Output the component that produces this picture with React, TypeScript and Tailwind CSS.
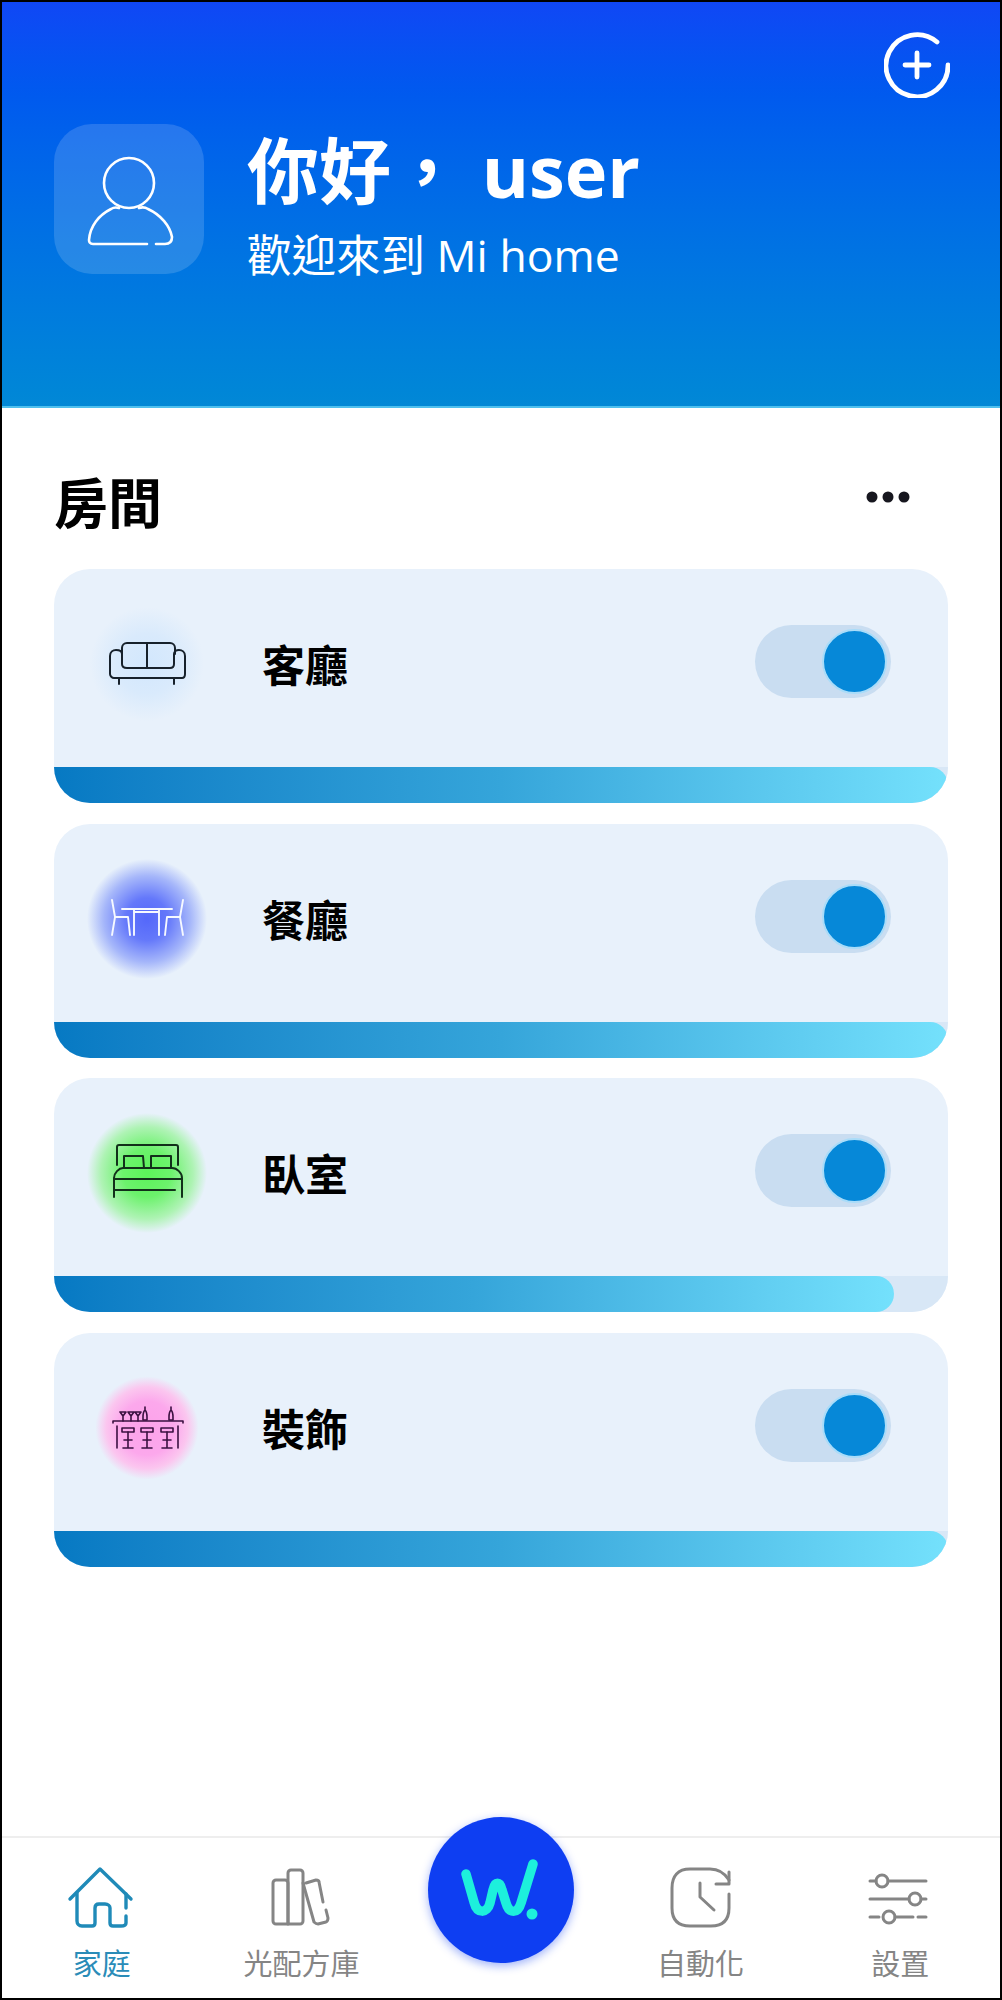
const F = { fontFamily: '"Open Sans","Noto Sans CJK TC",sans-serif' };

function Sofa() {
  return (
    <svg width="120" height="120" viewBox="0 0 120 120" fill="none" stroke="#17212b" strokeWidth="2" strokeLinecap="round" strokeLinejoin="round">
      <path d="M35 50v-6a5 5 0 0 1 5-5h43a5 5 0 0 1 5 5v6" />
      <path d="M60 39v24" />
      <path d="M35 50c0-3-3-4-6-4s-6 2-6 6v18c0 2 2 4 4 4h68c2 0 3-2 3-4V52c0-4-3-6-6-6s-5 2-5 4v10c0 3-2 4-4 4H40c-3 0-5-1-5-4z" />
      <path d="M32 74v6M87 74v6" />
    </svg>
  );
}
function Dining() {
  return (
    <svg width="120" height="120" viewBox="0 0 120 120" fill="none" stroke="#f6f9ff" strokeWidth="1.9" strokeLinecap="round" strokeLinejoin="round">
      <g transform="translate(0 -2)">
        <path d="M25 43l3 17-3 18M28 60h13l2 18" />
        <path d="M96 43l-3 17 3 18M93 60H80l-2 18" />
        <path d="M35 52h50M47 52v26M72 52v26M47 55h25" />
      </g>
    </svg>
  );
}
function Bed() {
  return (
    <svg width="120" height="120" viewBox="0 0 120 120" fill="none" stroke="#12301a" strokeWidth="2" strokeLinecap="round" strokeLinejoin="round">
      <g transform="translate(0 -3)">
        <path d="M30 55V37a2 2 0 0 1 2-2h57a2 2 0 0 1 2 2v18" />
        <path d="M37 58V46h19l1 12M64 58V46h20v12" />
        <path d="M27 87V68c0-5 5-10 9-10h49c5 0 10 5 10 10v19" />
        <path d="M27 69h68M27 80h61" />
      </g>
    </svg>
  );
}
function Bar() {
  return (
    <svg width="120" height="120" viewBox="0 0 120 120" fill="none" stroke="#3a1040" strokeWidth="1.6" strokeLinecap="round" strokeLinejoin="round">
      <path d="M26 55v-2h70v2" />
      <path d="M30 58v22M91 58v22" />
      <path d="M35 60h12v4H35zM54 60h12v4H54zM74 60h12v4H74z" />
      <path d="M41 64v16M60 64v16M80 64v16M36 80h10M55 80h10M75 80h10M37 72h8M56 72h8M76 72h8" />
      <path d="M33 44h6l-3 4zM41 44h6l-3 4zM48 44h6l-3 4zM36 48v5M44 48v5M51 48v5" />
      <path d="M58 39v3c-2 2-2 4-2 7v3h4v-3c0-3 0-5-2-7zM84 39v3c-2 2-2 4-2 7v3h4v-3c0-3 0-5-2-7z" />
    </svg>
  );
}

function Room({ name, glow, icon, bar }: { name: string; glow: string; icon: React.ReactNode; bar: string }) {
  return (
    <div className="flex h-[234px] flex-col overflow-hidden rounded-[36px] bg-[#e8f1fb]">
      <div className="flex flex-1 items-center pl-[33px] pr-[57px]">
        <div className={`mb-2 flex h-[120px] w-[120px] shrink-0 items-center justify-center rounded-full ${glow}`}>{icon}</div>
        <span className="mb-[5px] ml-[55px] flex-1 text-[43px] leading-none font-bold text-black" style={F}>{name}</span>
        <div className="mb-[13px] flex h-[73px] w-[136px] items-center justify-end rounded-full bg-[#c9ddf1] pr-[4px]">
          <div className="h-[65px] w-[65px] rounded-full border-2 border-[#a9dcf9] bg-[#0688d8]"></div>
        </div>
      </div>
      <div className="h-[36px] bg-[#d8e7f6]">
        <div className={`h-full rounded-r-[18px] bg-gradient-to-r from-[#0679c3] via-[#35a5da] to-[#74e1fc] ${bar}`}></div>
      </div>
    </div>
  );
}

function NavLabel({ children, active }: { children: React.ReactNode; active?: boolean }) {
  return (
    <span className={`text-[29px] leading-none font-normal ${active ? 'text-[#2a8cb8]' : 'text-[#858585]'}`} style={F}>{children}</span>
  );
}

export default function App() {
  return (
    <div className="flex h-[2000px] w-[1002px] flex-col border-2 border-black bg-white" style={F}>
      <header className="flex h-[406px] shrink-0 flex-col border-b-2 border-[#4fc0ee] bg-gradient-to-b from-[#1047f5] to-[#0288d6] pl-[52px] pr-[50px]">
        <div className="flex justify-end pt-[30px]">
          <svg width="66" height="66" viewBox="0 0 66 66" fill="none" stroke="#fff" strokeWidth="4.8" strokeLinecap="round">
            <path d="M53 10A31 31 0 1 0 64 33" />
            <path d="M33 21v24M21 33h24" />
          </svg>
        </div>
        <div className="mt-[17px] flex items-center">
          <div className="flex h-[150px] w-[150px] items-center justify-center rounded-[38px] bg-white/15">
            <svg width="90" height="96" viewBox="0 0 90 96" fill="none" stroke="#fff" strokeWidth="2.6" strokeLinecap="round" strokeLinejoin="round">
              <circle cx="45" cy="32" r="25" />
              <path d="M63 93H9c-3 0-4-2-4-4 1-14 10-25 22-31 3-2 5-2 8-1" />
              <path d="M55 57c3-1 6-1 9 1 13 6 22 17 24 28 0 4-2 7-7 7h-9" />
            </svg>
          </div>
          <div className="ml-[43px] flex flex-col pt-[10px] text-white">
            <h1 className="text-[72px] leading-[90px] font-bold">你好， user</h1>
            <p className="mt-[12px] text-[44.5px] leading-[56px] font-normal">歡迎來到 Mi home</p>
          </div>
        </div>
      </header>

      <main className="flex min-h-0 flex-1 flex-col px-[52px]">
        <div className="mt-[61px] flex h-[72px] items-center justify-between pb-[5px] pr-[38px]">
          <h2 className="text-[54px] leading-none font-bold text-black">房間</h2>
          <svg width="44" height="12" viewBox="0 0 44 12" fill="#17171f" className="mb-3">
            <circle cx="6" cy="6" r="5.5" /><circle cx="22" cy="6" r="5.5" /><circle cx="38" cy="6" r="5.5" />
          </svg>
        </div>
        <div className="mt-[28px] flex flex-col gap-[20.67px]">
          <Room name="客廳" icon={<Sofa />} bar="w-full" glow="bg-[radial-gradient(closest-side,#d2e7fd_0%,#d9eafc_50%,#e8f1fb_95%)]" />
          <Room name="餐廳" icon={<Dining />} bar="w-full" glow="bg-[radial-gradient(closest-side,#5468fa_0%,#6478fa_35%,#a5b6fa_72%,#e8f1fb_100%)]" />
          <Room name="臥室" icon={<Bed />} bar="w-[840px]" glow="bg-[radial-gradient(closest-side,#5cf25a_0%,#6cf26c_40%,#aef3b4_77%,#e8f1fb_100%)]" />
          <Room name="裝飾" icon={<Bar />} bar="w-full" glow="bg-[radial-gradient(closest-side,#fca2ea_0%,#fca8ec_45%,#fbc6ef_68%,#e8f1fb_86%)]" />
        </div>
      </main>

      <nav className="grid h-[162px] shrink-0 grid-cols-5 border-t-2 border-[#eeeeee]">
        <div className="flex flex-col items-center pt-[28px]">
          <svg width="70" height="64" viewBox="0 0 70 64" fill="none" stroke="#1f8ab8" strokeWidth="3.4" strokeLinecap="round" strokeLinejoin="round">
            <path d="M3 33L33 3l31 30" />
            <path d="M10 27v28c0 3 2 5 5 5h10c2 0 3-1 3-3V42c0-2 1-4 4-4h6c3 0 5 2 5 4v15c0 2 1 3 3 3h8c3 0 5-1 5-3v-7M59 42V28" />
          </svg>
          <div className="mt-[19px]"><NavLabel active>家庭</NavLabel></div>
        </div>
        <div className="flex flex-col items-center pt-[28px]">
          <svg width="70" height="64" viewBox="0 0 70 64" fill="none" stroke="#858585" strokeWidth="3" strokeLinecap="round" strokeLinejoin="round">
            <g transform="translate(3 0)">
              <path d="M7 14h9a3 3 0 0 1 3 3v41h-12a3 3 0 0 1-3-3V17a3 3 0 0 1 3-3z" />
              <path d="M22 4h9a3 3 0 0 1 3 3v48a3 3 0 0 1-3 3H19V7a3 3 0 0 1 3-3z" />
              <path d="M37 17l10-3c2 0 3 1 3 2l4 20M57 44l2 8c0 2 0 3-2 4l-8 2c-2 0-3-1-4-2L34 17" />
            </g>
          </svg>
          <div className="mt-[19px]"><NavLabel>光配方庫</NavLabel></div>
        </div>
        <div className="flex justify-center">
          <div className="relative z-10 mt-[-21px] flex h-[146px] w-[146px] items-center justify-center rounded-full bg-[#0e3ef2] shadow-[0_3px_10px_rgba(15,63,240,0.4)]">
            <svg width="146" height="146" viewBox="0 0 146 146" fill="none" stroke="#1df0dc" strokeWidth="9.5" strokeLinecap="round" strokeLinejoin="round">
              <path d="M38 57L46 85C49 97 59 97 62 86L65 73C67 64 72 64 74 73L78 86C81 97 90 97 93 86L105 47" />
              <circle cx="104" cy="97" r="5.5" fill="#1df0dc" stroke="none" />
            </svg>
          </div>
        </div>
        <div className="flex flex-col items-center pt-[28px]">
          <svg width="70" height="64" viewBox="0 0 70 64" fill="none" stroke="#858585" strokeWidth="3" strokeLinecap="round" strokeLinejoin="round">
            <path d="M63 14C58 6 52 3 44 3H24C12 3 6 10 6 22V42C6 54 12 60 24 60H45C57 60 63 54 63 42V28" />
            <path d="M50 18H63V6" />
            <path d="M34 17V31L48 44" />
          </svg>
          <div className="mt-[19px]"><NavLabel>自動化</NavLabel></div>
        </div>
        <div className="flex flex-col items-center pt-[28px]">
          <svg width="70" height="64" viewBox="0 0 70 64" fill="none" stroke="#858585" strokeWidth="3" strokeLinecap="round">
            <path d="M5 15h6M23 15h38M5 33h39M56 33h5M5 51h9M30 51h18M53 51h8" />
            <circle cx="17" cy="15" r="6" /><circle cx="50" cy="33" r="6" /><circle cx="24" cy="51" r="6" />
          </svg>
          <div className="mt-[19px]"><NavLabel>設置</NavLabel></div>
        </div>
      </nav>
    </div>
  );
}
